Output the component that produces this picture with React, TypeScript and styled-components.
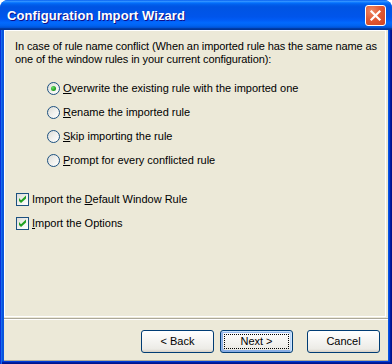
import React from "react";
import styled, { createGlobalStyle, css } from "styled-components";

type Choice = {
  id: string;
  before: string;
  hotkey: string;
  after: string;
};

const conflictChoices: Choice[] = [
  { id: "overwrite", before: "", hotkey: "O", after: "verwrite the existing rule with the imported one" },
  { id: "rename", before: "", hotkey: "R", after: "ename the imported rule" },
  { id: "skip", before: "", hotkey: "S", after: "kip importing the rule" },
  { id: "prompt", before: "", hotkey: "P", after: "rompt for every conflicted rule" },
];

const importChoices: Choice[] = [
  { id: "default", before: "Import the ", hotkey: "D", after: "efault Window Rule" },
  { id: "options", before: "", hotkey: "I", after: "mport the Options" },
];

const Label: React.FC<{ choice: Choice }> = ({ choice }) => (
  <LabelText>
    {choice.before}
    <u>{choice.hotkey}</u>
    {choice.after}
  </LabelText>
);

const CheckMark = () => (
  <svg width="11" height="11" viewBox="0 0 11 11">
    <path d="M2 4 L4 6.2 L9 1.6 L9 4.4 L4 9 L2 7 Z" fill="#21a121" />
  </svg>
);

const CloseGlyph = () => (
  <svg width="19" height="19" viewBox="0 0 19 19">
    <path d="M5.5 5.5 L13.5 13.5 M13.5 5.5 L5.5 13.5" stroke="#fff" strokeWidth="2.2" strokeLinecap="square" />
  </svg>
);

const App: React.FC = () => {
  const selected = "overwrite";
  return (
    <>
      <GlobalStyle />
      <Window>
        <TitleBar>
          <Title>Configuration Import Wizard</Title>
          <CloseButton>
            <CloseGlyph />
          </CloseButton>
        </TitleBar>
        <Frame>
          <Client>
            <Panel>
              <Intro>
                <div>In case of rule name conflict (When an imported rule has the same name as</div>
                <div>one of the window rules in your current configuration):</div>
              </Intro>
              <RadioList>
                {conflictChoices.map((c) => (
                  <OptionRow key={c.id}>
                    <RadioBox $checked={c.id === selected} />
                    <Label choice={c} />
                  </OptionRow>
                ))}
              </RadioList>
              <CheckList>
                {importChoices.map((c) => (
                  <OptionRow key={c.id}>
                    <CheckBox>
                      <CheckMark />
                    </CheckBox>
                    <Label choice={c} />
                  </OptionRow>
                ))}
              </CheckList>
            </Panel>
            <Separator />
            <ButtonBar>
              <Button>&lt; Back</Button>
              <Button $default>
                <FocusRect>Next &gt;</FocusRect>
              </Button>
              <CancelButton>Cancel</CancelButton>
            </ButtonBar>
          </Client>
        </Frame>
      </Window>
    </>
  );
};

export default App;

const GlobalStyle = createGlobalStyle`
  html, body {
    margin: 0;
    padding: 0;
    background: #fff;
  }
  body {
    font-family: "Liberation Sans", Arial, sans-serif;
    font-size: 11px;
    color: #000;
  }
`;

const Window = styled.div`
  width: 392px;
  height: 364px;
  display: flex;
  flex-direction: column;
  border-radius: 8px 8px 0 0;
  overflow: hidden;
  background: #0055ea;
`;

const TitleBar = styled.div`
  height: 30px;
  flex-shrink: 0;
  display: flex;
  align-items: flex-start;
  justify-content: space-between;
  padding: 0 6px 0 7px;
  box-sizing: border-box;
  background: linear-gradient(
    180deg,
    #0058ee 0%,
    #3593ff 4%,
    #288eff 6%,
    #127dff 8%,
    #036ffc 10%,
    #0262ee 14%,
    #0057e5 20%,
    #0054e3 24%,
    #0055eb 56%,
    #005bf5 66%,
    #026afe 76%,
    #0062ef 86%,
    #0052d6 92%,
    #0040ab 94%,
    #003092 100%
  );
`;

const Title = styled.span`
  margin-top: 8px;
  font-family: "Liberation Sans", Arial, sans-serif;
  font-weight: bold;
  font-size: 13px;
  line-height: 15px;
  color: #fff;
  text-shadow: 1px 1px #0f1089;
  letter-spacing: 0.1px;
`;

const CloseButton = styled.div`
  margin-top: 5px;
  width: 21px;
  height: 21px;
  box-sizing: border-box;
  border: 1px solid #fff;
  border-radius: 3px;
  display: flex;
  align-items: center;
  justify-content: center;
  background: radial-gradient(
    circle at 30% 25%,
    #ee8a67 0%,
    #e15a35 45%,
    #cf4322 100%
  );
`;

const Frame = styled.div`
  flex: 1;
  display: flex;
  min-width: 0;
  padding: 0 4px 3px 4px;
  background: #0855dd;
  box-shadow: inset 1px 0 #0831d9, inset 2px 0 #166aee, inset -1px -1px #00138c,
    inset -2px -2px #001ea0, inset -3px -3px #003bda;
`;

const Client = styled.div`
  flex: 1;
  min-width: 0;
  display: flex;
  flex-direction: column;
  background: #ece9d8;
  box-shadow: inset 0 -1px #aca899;
`;

const Panel = styled.div`
  height: 287px;
  box-sizing: border-box;
  margin-right: 2px;
  border: 1px solid #fff;
  padding: 9px 10px 0 10px;
  display: flex;
  flex-direction: column;
  overflow: hidden;
`;

const Intro = styled.div`
  line-height: 13px;
  white-space: nowrap;
  letter-spacing: -0.1px;
`;

const RadioList = styled.div`
  margin-top: 16px;
  padding-left: 32px;
  display: flex;
  flex-direction: column;
  gap: 11px;
`;

const CheckList = styled.div`
  margin-top: 26px;
  padding-left: 1px;
  display: flex;
  flex-direction: column;
  gap: 11px;
`;

const OptionRow = styled.div`
  height: 13px;
  display: flex;
  align-items: center;
  gap: 3px;
`;

const LabelText = styled.span`
  line-height: 13px;
  white-space: nowrap;
`;

const RadioBox = styled.span<{ $checked: boolean }>`
  position: relative;
  width: 13px;
  height: 13px;
  box-sizing: border-box;
  flex-shrink: 0;
  border: 1px solid #1c5180;
  border-radius: 50%;
  background: linear-gradient(135deg, #dcdcd7 0%, #f2f2ef 55%, #fff 100%);

  ${(p) =>
    p.$checked &&
    css`
      &::after {
        content: "";
        position: absolute;
        left: 3px;
        top: 3px;
        width: 5px;
        height: 5px;
        border-radius: 50%;
        background: radial-gradient(circle at 35% 35%, #6ee06a 0%, #21a121 60%, #178b17 100%);
      }
    `}
`;

const CheckBox = styled.span`
  width: 13px;
  height: 13px;
  box-sizing: border-box;
  flex-shrink: 0;
  border: 1px solid #1c5180;
  background: linear-gradient(135deg, #dcdcd7 0%, #f2f2ef 55%, #fff 100%);
  display: flex;

  svg {
    display: block;
  }
`;

const Separator = styled.div`
  margin-top: 1px;
  height: 0;
  border-top: 1px solid #aca899;
  border-bottom: 1px solid #fff;
`;

const ButtonBar = styled.div`
  display: flex;
  justify-content: flex-end;
  align-items: flex-start;
  gap: 6px;
  padding: 10px 8px 0 0;
`;

const Button = styled.div<{ $default?: boolean }>`
  width: 73px;
  height: 23px;
  box-sizing: border-box;
  border: 1px solid #003c74;
  border-radius: 3px;
  background: linear-gradient(180deg, #fff 0%, #ecebe6 86%, #d6d0c5 100%);
  display: flex;
  align-items: center;
  justify-content: center;
  font-size: 11px;
  line-height: 13px;

  ${(p) =>
    p.$default &&
    css`
      box-shadow: inset -1px 1px #cee7ff, inset 1px 2px #98b8ea, inset -2px 2px #bcd4f6,
        inset 1px -1px #89ade4, inset 2px -2px #89ade4;
    `}
`;

const CancelButton = styled(Button)`
  margin-left: 8px;
`;

const FocusRect = styled.span`
  width: 65px;
  height: 15px;
  box-sizing: border-box;
  border: 1px dotted #000;
  display: flex;
  align-items: center;
  justify-content: center;
`;
